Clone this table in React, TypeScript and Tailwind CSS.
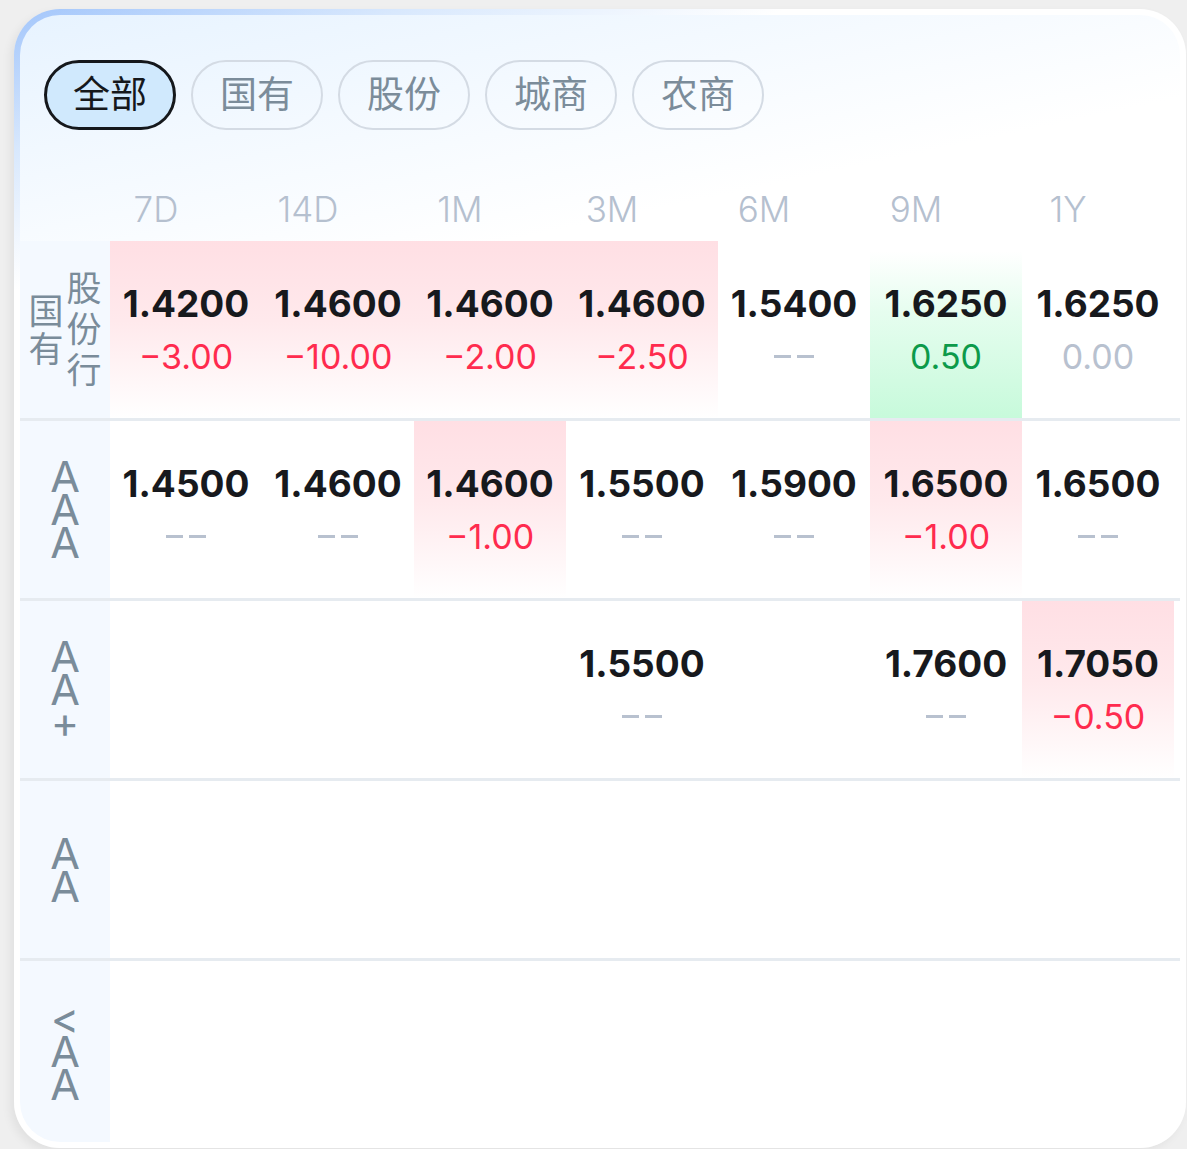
import React from "react";

type Tone = "red" | "green" | "gray" | "none";

interface Cell {
  value?: string;
  change?: string;
  tone?: Tone;
  bg?: "red" | "green";
}

const tabs = ["全部", "国有", "股份", "城商", "农商"];
const terms = ["7D", "14D", "1M", "3M", "6M", "9M", "1Y"];

const rows: { label: React.ReactNode; cells: Cell[] }[] = [
  {
    label: (
      <div className="flex items-center gap-[3px] text-[35px]">
        <div className="flex flex-col leading-[38px]">
          <span>国</span>
          <span>有</span>
        </div>
        <div className="flex flex-col leading-[41px]">
          <span>股</span>
          <span>份</span>
          <span>行</span>
        </div>
      </div>
    ),
    cells: [
      { value: "1.4200", change: "−3.00", tone: "red", bg: "red" },
      { value: "1.4600", change: "−10.00", tone: "red", bg: "red" },
      { value: "1.4600", change: "−2.00", tone: "red", bg: "red" },
      { value: "1.4600", change: "−2.50", tone: "red", bg: "red" },
      { value: "1.5400", change: "--", tone: "none" },
      { value: "1.6250", change: "0.50", tone: "green", bg: "green" },
      { value: "1.6250", change: "0.00", tone: "gray" },
    ],
  },
  {
    label: "AAA",
    cells: [
      { value: "1.4500", change: "--", tone: "none" },
      { value: "1.4600", change: "--", tone: "none" },
      { value: "1.4600", change: "−1.00", tone: "red", bg: "red" },
      { value: "1.5500", change: "--", tone: "none" },
      { value: "1.5900", change: "--", tone: "none" },
      { value: "1.6500", change: "−1.00", tone: "red", bg: "red" },
      { value: "1.6500", change: "--", tone: "none" },
    ],
  },
  {
    label: "AA+",
    cells: [
      {},
      {},
      {},
      { value: "1.5500", change: "--", tone: "none" },
      {},
      { value: "1.7600", change: "--", tone: "none" },
      { value: "1.7050", change: "−0.50", tone: "red", bg: "red" },
    ],
  },
  { label: "AA", cells: [{}, {}, {}, {}, {}, {}, {}] },
  { label: "<AA", cells: [{}, {}, {}, {}, {}, {}, {}] },
];

const font = "font-['Inter','Noto_Sans_CJK_SC',sans-serif]";

function StackedLabel({ text }: { text: string }) {
  return (
    <div className="flex flex-col items-center text-[43px] leading-[33px]">
      {text.split("").map((ch, i) => (
        <span key={i} className="flex h-[33px] items-center">
          {ch}
        </span>
      ))}
    </div>
  );
}

function DataCell({ cell }: { cell: Cell }) {
  const bgClass =
    cell.bg === "red"
      ? "bg-[linear-gradient(180deg,#ffdfe4_0%,#ffe9ec_45%,#ffffff00_100%)]"
      : cell.bg === "green"
      ? "bg-[linear-gradient(180deg,#ffffff00_6%,#e6fdef_40%,#c7fadb_100%)]"
      : "";
  const toneClass =
    cell.tone === "red"
      ? "text-[#ff2b4e]"
      : cell.tone === "green"
      ? "text-[#0c9a4a]"
      : "text-[#b8c1cf]";

  return (
    <div className={`flex flex-col items-center justify-center ${bgClass}`}>
      {cell.value && (
        <>
          <span className="text-[37px] font-bold leading-[53px] text-[#17191d]">{cell.value}</span>
          {cell.change === "--" ? (
            <span className="flex h-[53px] items-center gap-[6px]">
              <span className="h-[3px] w-[17px] bg-[#b8c1cf]" />
              <span className="h-[3px] w-[17px] bg-[#b8c1cf]" />
            </span>
          ) : (
            <span className={`text-[34px] leading-[53px] ${toneClass}`}>{cell.change}</span>
          )}
        </>
      )}
    </div>
  );
}

export default function App() {
  return (
    <div className={`min-h-screen bg-[#efefef] pl-[14px] pt-[9px] ${font}`}>
      <div className="h-[1139px] w-[1172px] rounded-[46px] bg-[linear-gradient(160deg,#a3c6fb_0%,#d8e8fd_9%,#ffffff_18%)] p-[6px] shadow-[-4px_4px_10px_rgba(0,0,0,0.06)]">
        <div className="flex h-full flex-col overflow-hidden rounded-[40px] bg-[linear-gradient(168deg,#e7f3ff_0%,#f5faff_14%,#ffffff_24%)] pt-[45px]">
          <div className="flex gap-[15px] pl-[24px]">
            {tabs.map((t, i) => (
              <div
                key={t}
                className={
                  i === 0
                    ? "flex h-[70px] w-[132px] items-center justify-center rounded-full border-[3px] border-[#15181c] bg-[#d0e9fd] text-[37px] text-[#15181c]"
                    : "flex h-[70px] w-[132px] items-center justify-center rounded-full border-2 border-[#d4dbe4] text-[37px] text-[#7b8c9a]"
                }
              >
                {t}
              </div>
            ))}
          </div>

          <div className="mb-[18px] mt-[53px] grid h-[40px] grid-cols-[repeat(7,152px)] pl-[60px]">
            {terms.map((t) => (
              <div key={t} className="flex items-center justify-center text-[35px] font-light text-[#b5c0cf]">
                {t}
              </div>
            ))}
          </div>

          <div className="flex flex-1 flex-col">
            {rows.map((row, ri) => (
              <div
                key={ri}
                className={
                  ri === rows.length - 1
                    ? "grid flex-1 grid-cols-[90px_repeat(7,152px)]"
                    : "grid h-[180px] grid-cols-[90px_repeat(7,152px)] border-b-[3px] border-[#e6ebf0]"
                }
              >
                <div className="flex items-center justify-center bg-[#f4f9ff] text-[#7a8c9a]">
                  {typeof row.label === "string" ? <StackedLabel text={row.label} /> : row.label}
                </div>
                {row.cells.map((c, ci) => (
                  <DataCell key={ci} cell={c} />
                ))}
              </div>
            ))}
          </div>
        </div>
      </div>
    </div>
  );
}
